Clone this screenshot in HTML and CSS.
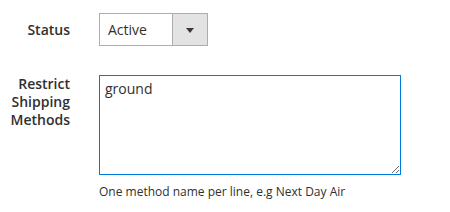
FILE: index.html
```html
<!DOCTYPE html>
<html>
<head>
<meta charset="utf-8">
<link rel="stylesheet" href="styles.css">
</head>
<body>
<form class="form">
  <div class="field field-status">
    <label class="label">Status</label>
    <div class="control">
      <div class="select">
        <span class="select-value">Active</span>
        <span class="select-button"><span class="arrow"></span></span>
      </div>
    </div>
  </div>
  <div class="field field-methods">
    <label class="label">Restrict Shipping Methods</label>
    <div class="control">
      <textarea class="textarea" readonly>ground</textarea>
      <div class="note">One method name per line, e.g Next Day Air</div>
    </div>
  </div>
</form>
</body>
</html>
```
FILE: styles.css
```css
html, body {
  margin: 0;
  padding: 0;
  background: #ffffff;
}
body {
  font-family: "Open Sans", "DejaVu Sans", sans-serif;
  color: #303030;
  font-size: 14px;
}
.form {
  display: flex;
  flex-direction: column;
  gap: 29px;
  padding-top: 13px;
}
.field {
  display: grid;
  grid-template-columns: 70px 302px;
  column-gap: 29px;
}
.field-status {
  align-items: center;
}
.field-methods {
  align-items: start;
}
.label {
  font-weight: 600;
  font-size: 14px;
  line-height: 18px;
  text-align: right;
  color: #303030;
}
.select {
  display: flex;
  width: 109px;
  height: 33px;
  box-sizing: border-box;
  border: 1px solid #adadad;
  background: #ffffff;
}
.select-value {
  flex: 1;
  padding-left: 8px;
  line-height: 31px;
  font-size: 14px;
  color: #303030;
}
.select-button {
  width: 34px;
  border-left: 1px solid #adadad;
  background: #e3e3e3;
  display: flex;
  align-items: center;
  justify-content: center;
}
.arrow {
  width: 0;
  height: 0;
  border-left: 4px solid transparent;
  border-right: 4px solid transparent;
  border-top: 5px solid #41362f;
  margin-top: 1px;
}
.textarea {
  display: block;
  width: 302px;
  height: 100px;
  box-sizing: border-box;
  margin: 0;
  border: 1px solid #007bdb;
  outline: none;
  padding: 4px 5px;
  font-family: "Open Sans", "DejaVu Sans", sans-serif;
  font-size: 14px;
  line-height: 18px;
  color: #303030;
  resize: vertical;
  border-radius: 0;
}
.note {
  margin-top: 8px;
  font-size: 12px;
  line-height: 18px;
  color: #303030;
}
```
